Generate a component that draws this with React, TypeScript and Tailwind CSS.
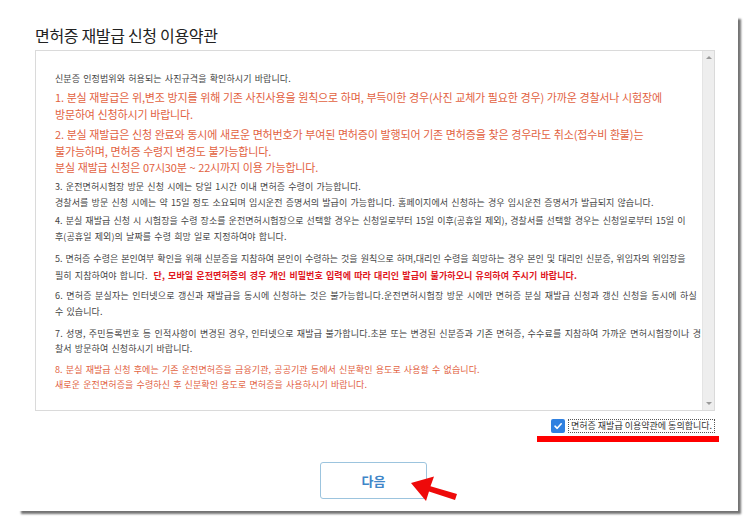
const small = 'text-[9px] tracking-[0.01em] [word-spacing:1px] text-[#444] whitespace-nowrap'
const large = 'text-[11px] tracking-[-0.015em] [word-spacing:0.5px] text-[#e2623f] whitespace-nowrap'

function Scrollbar() {
  return (
    <div className="w-[12px] bg-[#eeeeee] flex flex-col items-center justify-between py-[5px] border-l border-[#e4e4e4]">
      <div className="w-0 h-0 border-l-[3px] border-r-[3px] border-b-[3px] border-l-transparent border-r-transparent border-b-[#9a9a9a]" />
      <div className="w-0 h-0 border-l-[3px] border-r-[3px] border-t-[3px] border-l-transparent border-r-transparent border-t-[#9a9a9a]" />
    </div>
  )
}

export default function App() {
  return (
    <div className="relative w-[754px] h-[527px] bg-white font-['Noto_Sans_CJK_KR','Noto_Sans',sans-serif] overflow-hidden">
      <div className="ml-[18px] mt-[16px] w-[720px] h-[495px] bg-white shadow-[3px_3px_2px_rgba(0,0,0,0.55)] pl-[17px] pt-[9px]">
        {/* Title */}
        <h1 className="text-[16px] leading-[20px] tracking-[-0.02em] text-[#222] font-normal">면허증 재발급 신청 이용약관</h1>

        {/* Terms box */}
        <div className="mt-[5px] w-[680px] h-[361px] border border-[#dadada] flex">
          <div className="flex-1 pl-[19px] pt-[20px] overflow-hidden">
            <p className={`${small} leading-[16px]`}>신분증 인정범위와 허용되는 사진규격을 확인하시기 바랍니다.</p>

            <p className={`${large} leading-[17px] mt-[2px]`}>
              1. 분실 재발급은 위,변조 방지를 위해 기존 사진사용을 원칙으로 하며, 부득이한 경우(사진 교체가 필요한 경우) 가까운 경찰서나 시험장에
              <br />
              방문하여 신청하시기 바랍니다.
            </p>

            <p className={`${large} leading-[16.5px] mt-[3px]`}>
              2. 분실 재발급은 신청 완료와 동시에 새로운 면허번호가 부여된 면허증이 발행되어 기존 면허증을 찾은 경우라도 취소(접수비 환불)는
              <br />
              불가능하며, 면허증 수령지 변경도 불가능합니다.
              <br />
              분실 재발급 신청은 07시30분 ~ 22시까지 이용 가능합니다.
            </p>

            <p className={`${small} leading-[16px] mt-[3px]`}>
              3. 운전면허시험장 방문 신청 시에는 당일 1시간 이내 면허증 수령이 가능합니다.
              <br />
              경찰서를 방문 신청 시에는 약 15일 정도 소요되며 임시운전 증명서의 발급이 가능합니다. 홈페이지에서 신청하는 경우 임시운전 증명서가 발급되지 않습니다.
            </p>

            <p className={`${small} leading-[16px] mt-[2px]`}>
              <span className="tracking-[0.005em]">
                4. 분실 재발급 신청 시 시험장을 수령 장소를 운전면허시험장으로 선택할 경우는 신청일로부터 15일 이후(공휴일 제외), 경찰서를 선택할 경우는 신청일로부터 15일 이
              </span>
              <br />
              후(공휴일 제외)의 날짜를 수령 희망 일로 지정하여야 합니다.
            </p>

            <p className={`${small} leading-[17px] mt-[5px]`}>
              <span className="tracking-[0em]">
                5. 면허증 수령은 본인여부 확인을 위해 신분증을 지참하여 본인이 수령하는 것을 원칙으로 하며,대리인 수령을 희망하는 경우 본인 및 대리인 신분증, 위임자의 위임장을
              </span>
              <br />
              필히 지참하여야 합니다.
              <span className="ml-[6px] font-bold text-[#e0161d]">
                단, 모바일 운전면허증의 경우 개인 비밀번호 입력에 따라 대리인 발급이 불가하오니 유의하여 주시기 바랍니다.
              </span>
            </p>

            <p className={`${small} leading-[16px] mt-[4px]`}>
              <span className="tracking-[0.025em]">
                6. 면허증 분실자는 인터넷으로 갱신과 재발급을 동시에 신청하는 것은 불가능합니다.운전면허시험장 방문 시에만 면허증 분실 재발급 신청과 갱신 신청을 동시에 하실
              </span>
              <br />
              수 있습니다.
            </p>

            <p className={`${small} leading-[15px] mt-[6px]`}>
              <span className="tracking-[0.02em]">
                7. 성명, 주민등록번호 등 인적사항이 변경된 경우, 인터넷으로 재발급 불가합니다.초본 또는 변경된 신분증과 기존 면허증, 수수료를 지참하여 가까운 면허시험장이나 경
              </span>
              <br />
              찰서 방문하여 신청하시기 바랍니다.
            </p>

            <p className={`${small} leading-[15px] mt-[6px] !text-[#e2623f]`}>
              8. 분실 재발급 신청 후에는 기존 운전면허증을 금융기관, 공공기관 등에서 신분확인 용도로 사용할 수 없습니다.
              <br />
              새로운 운전면허증을 수령하신 후 신분확인 용도로 면허증을 사용하시기 바랍니다.
            </p>
          </div>
          <Scrollbar />
        </div>

        {/* Agree checkbox */}
        <div className="w-[680px] flex justify-end mt-[8px]">
          <label className="flex items-center gap-[3px]">
            <span className="w-[14px] h-[14px] bg-[#2f80e0] rounded-[2px] flex items-center justify-center">
              <svg width="10" height="10" viewBox="0 0 10 10" fill="none">
                <path d="M2 5.2 L4.2 7.3 L8.2 2.8" stroke="white" strokeWidth="1.6" strokeLinecap="round" strokeLinejoin="round" />
              </svg>
            </span>
            <span className="border border-dotted border-[#555] px-[2px] text-[9px] leading-[12px] text-[#333] whitespace-nowrap">
              면허증 재발급 이용약관에 동의합니다.
            </span>
          </label>
        </div>
        <div className="w-[684px] flex justify-end mt-[3px]">
          <div className="w-[182px] h-[6px] bg-[#ff0000]" />
        </div>

        {/* Next button */}
        <button className="ml-[285px] mt-[20px] w-[107px] h-[37px] border border-[#9cc4de] rounded-[3px] bg-white text-[13px] font-bold text-[#3f86c8]">
          다음
        </button>
      </div>

      {/* Red arrow annotation */}
      <svg className="absolute left-0 top-0 pointer-events-none" width="754" height="527" viewBox="0 0 754 527">
        <polygon
          points="411,483 434,476.5 430.5,486.3 457,494 455,500 429,491.6 426,501"
          fill="#ee0a0a"
        />
      </svg>
    </div>
  )
}
